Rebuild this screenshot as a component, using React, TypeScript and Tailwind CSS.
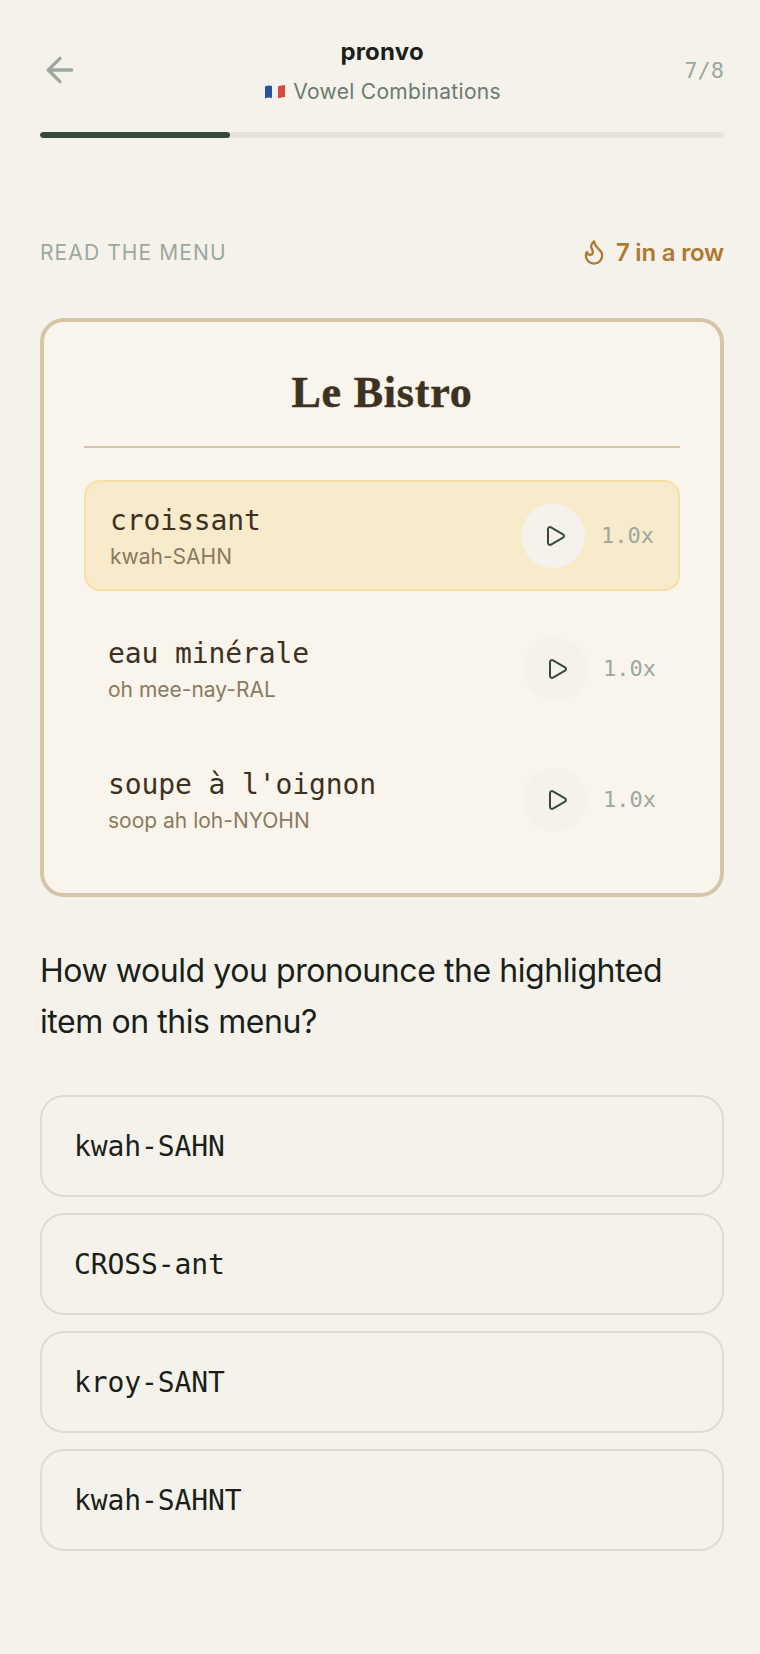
import { ArrowLeft, Flame, Play } from "lucide-react";

const sans = "font-['Inter','Noto_Sans',sans-serif]";
const mono = "font-['DejaVu_Sans_Mono','Liberation_Mono',monospace]";

const items = [
  { name: "croissant", hint: "kwah-SAHN", active: true },
  { name: "eau minérale", hint: "oh mee-nay-RAL", active: false },
  { name: "soupe à l'oignon", hint: "soop ah loh-NYOHN", active: false },
];

const options = ["kwah-SAHN", "CROSS-ant", "kroy-SANT", "kwah-SAHNT"];

function FrenchFlag() {
  return (
    <svg width="20" height="16" viewBox="0 0 20 16" className="ml-0.5 shrink-0">
      <path d="M0 2.5 Q3.5 1 7 2 L7 14 Q3.5 13 0 14.5 Z" fill="#2a5299" />
      <path d="M7 2 Q10 2.8 13 2.2 L13 14.2 Q10 14.8 7 14 Z" fill="#f1f1f1" />
      <path d="M13 2.2 Q16.5 1.6 20 1 L20 13 Q16.5 13.6 13 14.2 Z" fill="#d84a3c" />
    </svg>
  );
}

function MenuRow({ name, hint, active }: { name: string; hint: string; active: boolean }) {
  return (
    <div
      className={
        active
          ? "flex h-[111px] items-center justify-between rounded-2xl border-2 border-[#f5dfa3] bg-[#f8ebcc] px-6"
          : "flex h-[106px] items-center justify-between rounded-2xl px-6"
      }
    >
      <div className="pt-0.5">
        <p className={`${mono} text-[28px] leading-[40px] tracking-[-0.1px] text-[#3d3122]`}>{name}</p>
        <p className={`${sans} text-[21px] leading-[32px] text-[#8a7a5f]`}>{hint}</p>
      </div>
      <div className="flex items-center gap-4">
        <div className="flex h-16 w-16 items-center justify-center rounded-full bg-[#f5f2eb]">
          <Play size={24} strokeWidth={2} className="ml-1 text-[#354a3c]" />
        </div>
        <span className={`${mono} text-[22px] leading-8 text-[#9ca89f]`}>1.0x</span>
      </div>
    </div>
  );
}

export default function App() {
  return (
    <div className={`${sans} min-h-[1654px] bg-[#f5f2eb] pt-9 pr-9 pl-10 text-[#1a1f1a]`}>
      <div className="flex h-[68px] items-center justify-between">
        <ArrowLeft size={40} strokeWidth={2} className="text-[#9ca89f]" />
        <div className="flex flex-col items-center self-start">
          <p className="text-[24px] leading-8 font-bold tracking-[0.2px]">pronvo</p>
          <div className="mt-2 flex items-center gap-2">
            <FrenchFlag />
            <span className="text-[21px] leading-8 tracking-[0.3px] text-[#6b7a70]">Vowel Combinations</span>
          </div>
        </div>
        <span className={`${mono} text-[22px] text-[#9ca89f]`}>7/8</span>
      </div>

      <div className="mt-7 h-1.5 overflow-hidden rounded-full bg-[#e8e3d9]">
        <div className="h-full w-[27.8%] rounded-full bg-[#354a3c]" />
      </div>

      <div className="mt-[98px] flex h-8 items-center justify-between">
        <span className="pt-0.5 text-[21px] tracking-[1.1px] text-[#9ca89f]">READ THE MENU</span>
        <div className="flex items-center gap-2">
          <Flame size={28} strokeWidth={2} className="text-[#b07830]" />
          <span className="pt-px text-[24px] font-semibold tracking-[-0.2px] text-[#b07830]">7 in a row</span>
        </div>
      </div>

      <div className="mt-[50px] rounded-3xl border-4 border-[#d4c5a9] bg-[#f9f5ed] p-10">
        <div className="border-b-2 border-[#d4c5a9] pb-6 text-center">
          <h1 className="pt-px font-['Liberation_Serif',serif] text-[44px] leading-[59px] font-bold tracking-[0.8px] text-[#3d3122] [-webkit-text-stroke:0.5px_#3d3122]">Le Bistro</h1>
        </div>
        <div className="mt-8 flex flex-col gap-[25px]">
          {items.map((item) => (
            <MenuRow key={item.name} {...item} />
          ))}
        </div>
      </div>

      <p className="mt-12 text-[32px] leading-[51px] tracking-[-0.43px]">
        How would you pronounce the highlighted
        <br />
        item on this menu?
      </p>

      <div className="mt-12 flex flex-col gap-4">
        {options.map((option) => (
          <div
            key={option}
            className="flex h-[102px] items-center rounded-3xl border-2 border-[#dedbd5] px-8"
          >
            <span className={`${mono} pt-0.5 text-[28px] tracking-[-0.1px]`}>{option}</span>
          </div>
        ))}
      </div>
    </div>
  );
}
